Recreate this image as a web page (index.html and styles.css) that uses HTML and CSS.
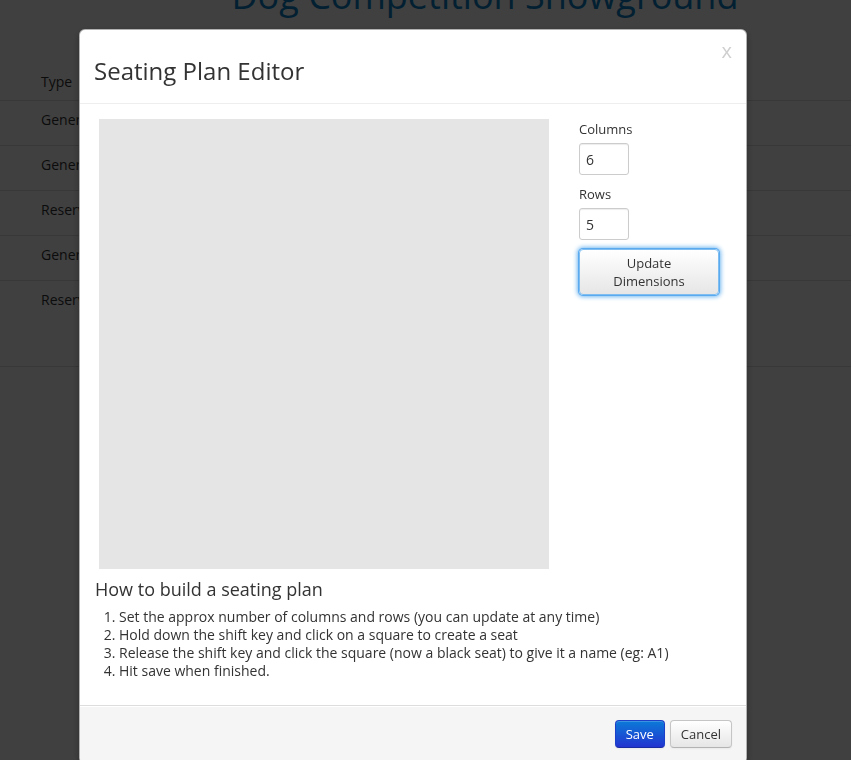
FILE: index.html
```html
<!DOCTYPE html>
<html>
<head>
<meta charset="utf-8">
<link rel="stylesheet" href="styles.css">
</head>
<body>
<div class="page">
  <h1 class="page-title">Dog Competition Showground</h1>
  <table class="grid">
    <thead><tr><th>Type</th></tr></thead>
    <tbody>
      <tr><td>General Admission</td></tr>
      <tr><td>General Admission</td></tr>
      <tr><td>Reserved Seating</td></tr>
      <tr><td>General Admission</td></tr>
      <tr class="last"><td>Reserved Seating</td></tr>
    </tbody>
  </table>
</div>
<div class="backdrop"></div>
<div class="modal">
  <div class="modal-header">
    <h3>Seating Plan Editor</h3>
    <span class="close">x</span>
  </div>
  <div class="modal-body">
    <div class="editor">
      <div class="canvas"></div>
      <div class="controls">
        <label class="lbl">Columns</label>
        <input class="num" type="text" value="6">
        <label class="lbl">Rows</label>
        <input class="num" type="text" value="5">
        <button class="btn btn-focus">Update<br>Dimensions</button>
      </div>
    </div>
    <h4 class="howto">How to build a seating plan</h4>
    <ol class="steps">
      <li>Set the approx number of columns and rows (you can update at any time)</li>
      <li>Hold down the shift key and click on a square to create a seat</li>
      <li>Release the shift key and click the square (now a black seat) to give it a name (eg: A1)</li>
      <li>Hit save when finished.</li>
    </ol>
  </div>
  <div class="modal-footer">
    <button class="btn btn-primary">Save</button>
    <button class="btn">Cancel</button>
  </div>
</div>
</body>
</html>
```
FILE: styles.css
```css
html, body {
  margin: 0;
  padding: 0;
  height: 100%;
  overflow: hidden;
  background: #fff;
  font-family: "Open Sans", "Liberation Sans", sans-serif;
  color: #333;
  font-size: 14px;
  line-height: 20px;
}
.page {
  width: 100%;
}
.page-title {
  margin: -24px 0 0 0;
  padding-left: 119px;
  text-align: center;
  font-size: 36px;
  line-height: 40px;
  font-weight: 400;
  color: #0a80c2;
}
.grid {
  width: 100%;
  border-collapse: collapse;
  margin-top: 48px;
}
.grid th {
  text-align: left;
  font-weight: 400;
  padding: 8px 41px 8px;
  border-bottom: 1px solid #ddd;
  height: 19px;
}
.grid td {
  padding: 9px 41px 15px;
  border-bottom: 1px solid #ddd;
  height: 20px;
  vertical-align: top;
}
.grid tr.last td {
  height: 61px;
}
.backdrop {
  position: fixed;
  inset: 0;
  background: rgba(0, 0, 0, 0.75);
}
.modal {
  position: fixed;
  left: 79px;
  top: 29px;
  width: 666px;
  background: #fff;
  border: 1px solid rgba(0, 0, 0, 0.3);
  border-radius: 6px;
  box-shadow: 0 3px 7px rgba(0, 0, 0, 0.3);
  overflow: hidden;
}
.modal-header {
  display: flex;
  justify-content: space-between;
  align-items: flex-start;
  padding: 24px 14px 15px 14px;
  border-bottom: 1px solid #eee;
}
.modal-header h3 {
  margin: 0;
  font-size: 24px;
  line-height: 34px;
  font-weight: 400;
  color: #333;
}
.close {
  margin-top: -13px;
  font-size: 20px;
  line-height: 20px;
  color: #cfcfcf;
}
.modal-body {
  padding: 15px 15px 25px 15px;
}
.editor {
  display: flex;
  gap: 30px;
  padding-left: 4px;
}
.canvas {
  width: 450px;
  height: 450px;
  background: #e5e5e5;
}
.controls {
  display: flex;
  flex-direction: column;
  align-items: flex-start;
}
.lbl {
  font-size: 13px;
  line-height: 20px;
  margin-bottom: 4px;
}
.num {
  box-sizing: border-box;
  width: 50px;
  height: 32px;
  padding: 4px 6px;
  border: 1px solid #ccc;
  border-radius: 3px;
  font-family: inherit;
  font-size: 14px;
  color: #333;
  margin: 0 0 9px 0;
  box-shadow: inset 0 1px 1px rgba(0, 0, 0, 0.075);
}
.btn {
  font-family: inherit;
  font-size: 13px;
  line-height: 20px;
  padding: 3px 10px;
  color: #333;
  border: 1px solid #c5c5c5;
  border-bottom-color: #b3b3b3;
  border-radius: 4px;
  background: linear-gradient(#ffffff, #e6e6e6);
  box-shadow: inset 0 1px 0 rgba(255, 255, 255, 0.2), 0 1px 2px rgba(0, 0, 0, 0.05);
  margin: 0;
}
.btn-focus {
  width: 140px;
  line-height: 18px;
  padding: 4px 6px;
  border-color: #7fbdf0;
  box-shadow: 0 0 0 1px #5aaaf0, 0 0 4px 2px rgba(82, 168, 236, 0.8);
}
.howto {
  margin: 10px 0 9px 0;
  font-size: 18px;
  line-height: 20px;
  font-weight: 400;
  color: #333;
}
.steps {
  margin: 0;
  padding-left: 24px;
  font-size: 14px;
  line-height: 18px;
}
.modal-footer {
  display: flex;
  justify-content: flex-end;
  gap: 5px;
  padding: 14px 14px 15px;
  background: #f5f5f5;
  border-top: 1px solid #ddd;
  box-shadow: inset 0 1px 0 #fff;
}
.btn-primary {
  color: #fff;
  background: linear-gradient(#0b7ad8, #2334d0);
  border-color: #1d3fc8 #1d3fc8 #1a2aa0;
}
```
